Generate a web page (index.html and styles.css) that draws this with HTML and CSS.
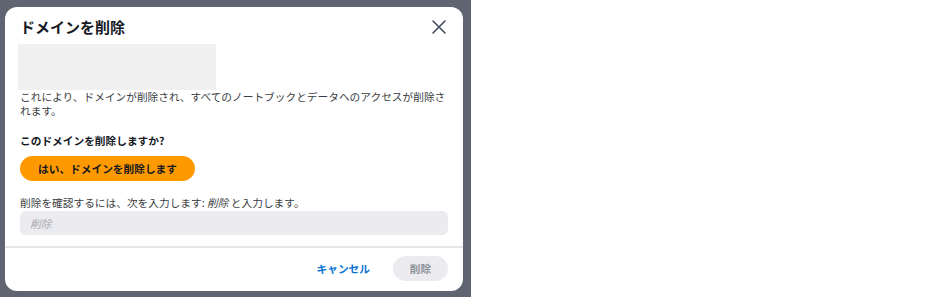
FILE: index.html
```html
<!DOCTYPE html>
<html lang="ja">
<head>
    <meta charset="UTF-8">
    <meta name="viewport" content="width=device-width, initial-scale=1.0">
    <title>ドメインを削除</title>
    <link rel="stylesheet" href="styles.css">
</head>
<body>
    <div class="backdrop">
        <div class="modal">
            <div class="modal-header">
                <h2>ドメインを削除</h2>
                <button class="close-btn" aria-label="閉じる">
                    <svg width="14" height="14" viewBox="0 0 14 14">
                        <path d="M1 1 L13 13 M13 1 L1 13" stroke="#414d5c" stroke-width="1.6" fill="none" stroke-linecap="round"/>
                    </svg>
                </button>
            </div>
            <div class="modal-body">
                <div class="placeholder-box"></div>
                <p class="desc">これにより、ドメインが削除され、すべてのノートブックとデータへのアクセスが削除されます。</p>
                <p class="question">このドメインを削除しますか?</p>
                <button class="confirm-btn">はい、ドメインを削除します</button>
                <p class="label">削除を確認するには、次を入力します: <em>削除</em> と入力します。</p>
                <input class="confirm-input" type="text" placeholder="削除">
            </div>
            <div class="modal-footer">
                <button class="cancel-btn">キャンセル</button>
                <button class="delete-btn" disabled>削除</button>
            </div>
        </div>
    </div>
</body>
</html>
```

FILE: styles.css
```css
* {
    margin: 0;
    padding: 0;
    box-sizing: border-box;
    font-family: "Noto Sans CJK JP", "Noto Sans", sans-serif;
}

body {
    background-color: #fff;
}

.backdrop {
    width: 471px;
    height: 297px;
    background-color: #5f6470;
    padding: 7px 0 0 5px;
}

.modal {
    width: 458px;
    height: 284px;
    background-color: #fff;
    border-radius: 12px;
    display: flex;
    flex-direction: column;
}

.modal-header {
    display: flex;
    justify-content: space-between;
    align-items: center;
    padding: 10px 17px 0 15px;
}

.modal-header h2 {
    font-size: 15px;
    line-height: 20px;
    font-weight: 700;
    color: #16191f;
}

.close-btn {
    border: none;
    background: none;
    display: flex;
    cursor: pointer;
}

.modal-body {
    padding: 7px 15px 11px 15px;
    font-size: 10.7px;
    line-height: 14px;
    color: #3a3d42;
}

.placeholder-box {
    width: 198px;
    height: 46px;
    margin-left: -2px;
    background-color: #f0f0f0;
}

.question {
    margin-top: 16px;
    font-weight: 700;
    color: #16191f;
}

.confirm-btn {
    margin-top: 8px;
    height: 25px;
    padding: 0 18px;
    border: none;
    border-radius: 13px;
    background-color: #ff9900;
    color: #16191f;
    font-size: 10.7px;
    font-weight: 700;
    cursor: pointer;
}

.label {
    margin-top: 15px;
}

.confirm-input {
    display: block;
    margin-top: 1px;
    width: 100%;
    height: 24px;
    padding: 0 10px;
    border: none;
    border-radius: 6px;
    background-color: #ebebf0;
    font-size: 10.7px;
}

.confirm-input::placeholder {
    color: #a7a9ae;
    font-style: italic;
}

.modal-footer {
    border-top: 2px solid #e6e6e8;
    display: flex;
    justify-content: flex-end;
    align-items: center;
    gap: 23px;
    padding: 8px 15px 0 15px;
}

.cancel-btn {
    border: none;
    background: none;
    color: #0972d3;
    font-size: 10.7px;
    font-weight: 700;
    cursor: pointer;
}

.delete-btn {
    height: 25px;
    width: 55px;
    border: none;
    border-radius: 13px;
    background-color: #ebebf0;
    color: #8d9199;
    font-size: 10.7px;
    font-weight: 700;
}
```
